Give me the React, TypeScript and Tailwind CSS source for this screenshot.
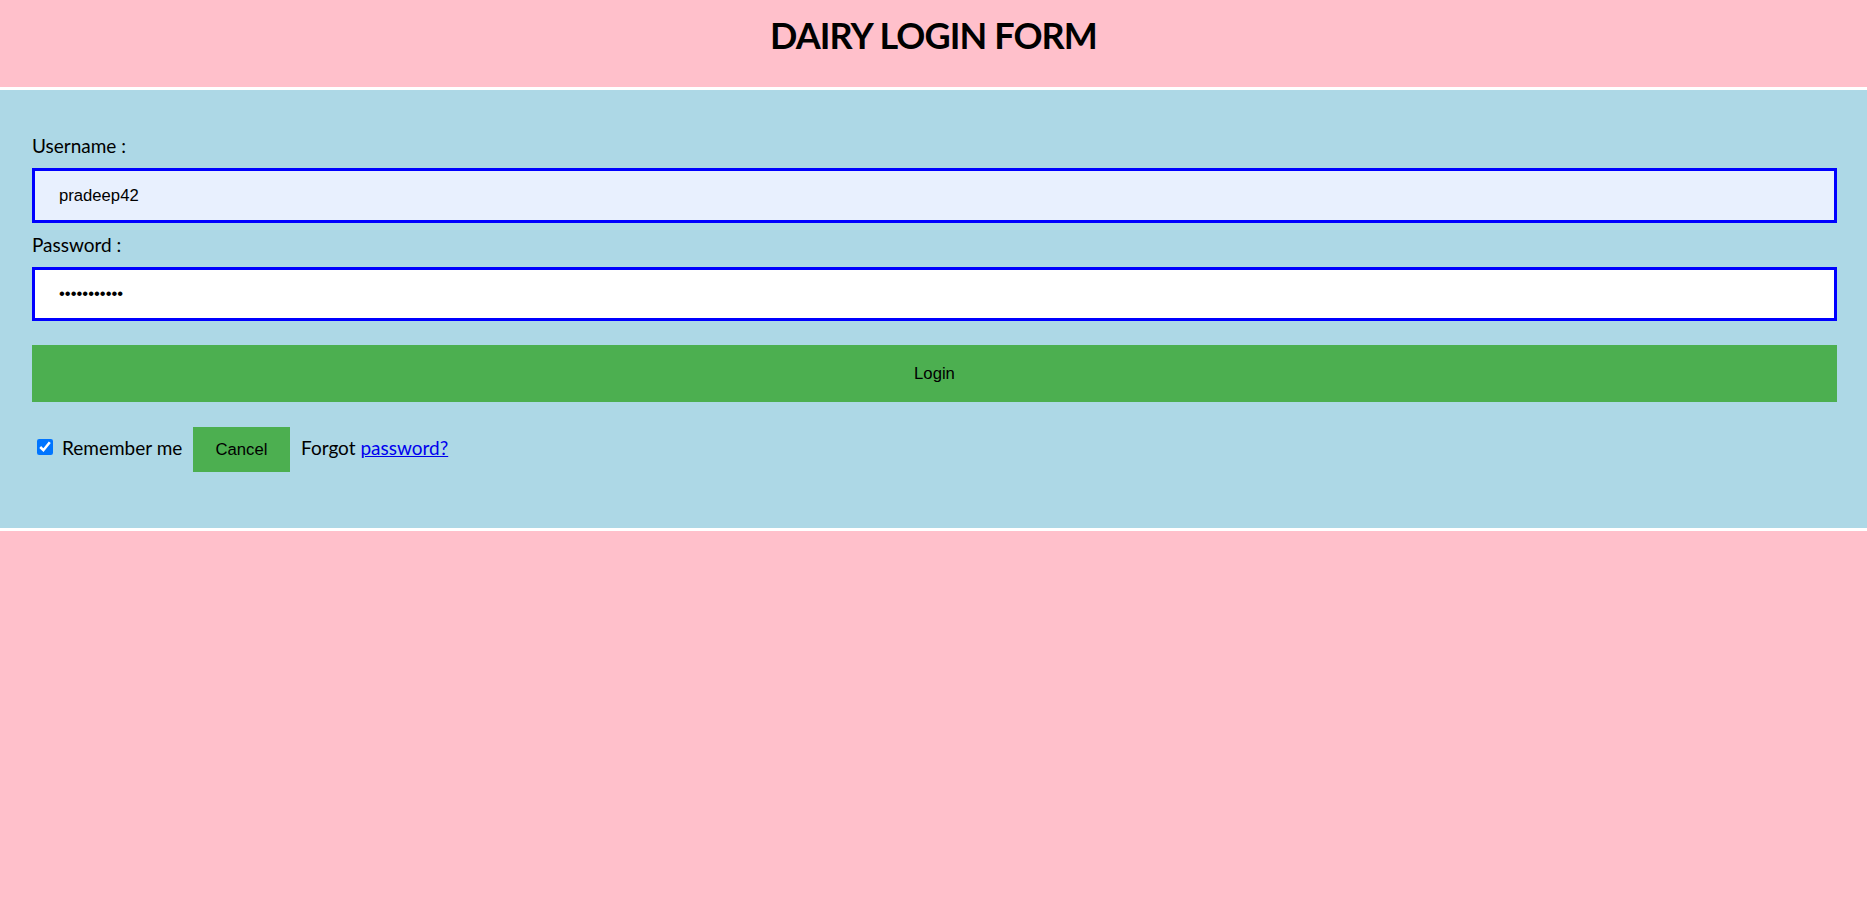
import React from "react";

export default function App() {
  return (
    <div className="min-h-screen bg-[#FFC0CB] text-black" style={{ fontFamily: "Lato, 'Open Sans', sans-serif" }}>
      <header className="h-[87px] flex justify-center">
        <h1 className="mt-[15px] text-[36px] leading-[40px] font-bold tracking-[-0.9px]">DAIRY LOGIN FORM</h1>
      </header>
      <section className="bg-[#ADD8E6] border-y-[3px] border-white pt-[44px] pb-[56px] pl-[32px] pr-[30px]">
        <div className="h-[24px] leading-[24px] text-[19px] mb-[10px]">Username :</div>
        <input
          type="text"
          readOnly
          value="pradeep42"
          className="block w-full h-[55px] border-[3px] border-[#0000FF] bg-[#E8F0FE] pl-[24px] text-[16.67px] outline-none"
          style={{ fontFamily: "'Liberation Sans', Arial, sans-serif" }}
        />
        <div className="h-[24px] leading-[24px] text-[19px] mt-[10px] mb-[10px]">Password :</div>
        <input
          type="password"
          readOnly
          value="abcdefghijk"
          className="block w-full h-[54px] border-[3px] border-[#0000FF] bg-white pl-[24px] text-[16.67px] outline-none"
          style={{ fontFamily: "'Liberation Sans', Arial, sans-serif" }}
        />
        <button
          type="button"
          className="block w-full h-[57px] mt-[24px] bg-[#4CAF50] text-[16.67px] text-black"
          style={{ fontFamily: "'Liberation Sans', Arial, sans-serif" }}
        >
          Login
        </button>
        <div className="flex items-start mt-[25px] h-[45px]">
          <input
            type="checkbox"
            readOnly
            checked
            className="mt-[12px] ml-[5px] w-[16px] h-[16px] accent-[#0075FF]"
          />
          <span className="ml-[9px] mt-[9px] w-[131px] h-[24px] leading-[24px] text-[19px] whitespace-nowrap">Remember me</span>
          <button
            type="button"
            className="w-[97px] h-[45px] bg-[#4CAF50] text-[16.67px] text-black"
            style={{ fontFamily: "'Liberation Sans', Arial, sans-serif" }}
          >
            Cancel
          </button>
          <span className="ml-[11px] mt-[9px] h-[24px] leading-[24px] text-[19px] whitespace-nowrap">
            Forgot{" "}
            <a href="#" className="text-[#0000EE] underline">password?</a>
          </span>
        </div>
      </section>
    </div>
  );
}
